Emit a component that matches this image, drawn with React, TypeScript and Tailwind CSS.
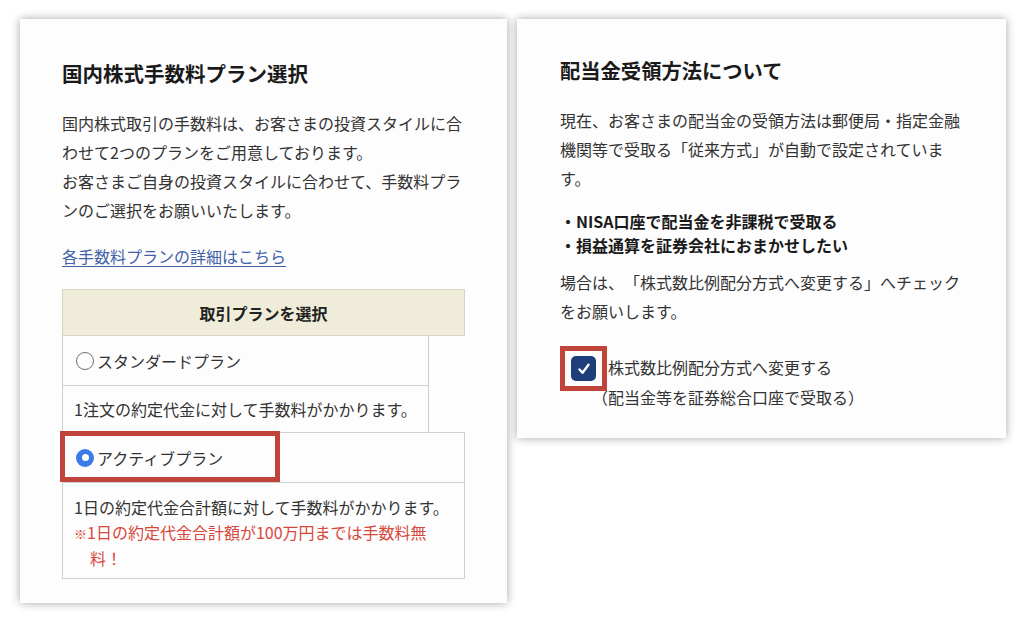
import React from "react";

const font = { fontFamily: '"Noto Sans CJK JP", "Noto Sans", sans-serif' };

function RadioOff() {
  return <span className="inline-block w-[18px] h-[18px] rounded-full border-[1.5px] border-[#6f6f6f] bg-white shrink-0" />;
}
function RadioOn() {
  return (
    <span className="w-[18px] h-[18px] rounded-full bg-[#3b7be8] shrink-0 flex items-center justify-center">
      <span className="w-[7px] h-[7px] rounded-full bg-white" />
    </span>
  );
}

export default function App() {
  return (
    <div className="w-[1024px] h-[623px] bg-white overflow-hidden text-[#333] [text-spacing-trim:space-all]" style={font}>
      <div className="flex items-start gap-[10px] pl-[20px] pt-[19px]">
        {/* Left card */}
        <div className="w-[487px] h-[584px] bg-[#fdfdfd] shadow-[0_0_9px_rgba(0,0,0,0.35)] px-[42px] pt-[39px]">
          <h2 className="text-[20.5px] leading-[30px] font-bold text-[#1a1a1a]">国内株式手数料プラン選択</h2>
          <p className="mt-[21px] text-[16px] leading-[29px]">
            国内株式取引の手数料は、お客さまの投資スタイルに合わせて2つのプランをご用意しております。
            <br />
            お客さまご自身の投資スタイルに合わせて、手数料プランのご選択をお願いいたします。
          </p>
          <div className="mt-[17px] text-[16px] leading-[29px]">
            <span className="text-[#4262a8] underline underline-offset-[3px] decoration-[1px]">各手数料プランの詳細はこちら</span>
          </div>
          <div className="mt-[18px] w-[403px] text-[16px]">
            <div className="h-[47px] bg-[#efedd9] border border-[#d6d4c4] flex items-center justify-center font-bold text-[#222]">
              取引プランを選択
            </div>
            <div className="w-[367px] h-[50px] border border-t-0 border-[#d0d0d0] flex items-center gap-[3px] pl-[13px]">
              <RadioOff />
              <span>スタンダードプラン</span>
            </div>
            <div className="w-[367px] h-[46px] border-x border-[#d0d0d0] flex items-center pl-[11px]">
              1注文の約定代金に対して手数料がかかります。
            </div>
            <div className="relative h-[51px] border border-[#d0d0d0] flex items-center gap-[3px] pl-[13px]">
              <RadioOn />
              <span>アクティブプラン</span>
              <div className="absolute left-[-3px] top-[-2px] w-[220px] h-[51px] border-[5px] border-[#c0443a]" />
            </div>
            <div className="h-[96px] border border-t-0 border-[#d0d0d0] pl-[11px] pt-[12px] leading-[24.5px]">
              <div>1日の約定代金合計額に対して手数料がかかります。</div>
              <div className="text-[#d8473b] pl-[16px] -indent-[16px] pr-[30px]">
                <span className="text-[13px]">※</span>1日の約定代金合計額が100万円までは手数料無料！
              </div>
            </div>
          </div>
        </div>

        {/* Right card */}
        <div className="w-[489px] h-[419px] bg-[#fdfdfd] shadow-[0_0_9px_rgba(0,0,0,0.35)] pl-[43px] pr-[40px] pt-[36px]">
          <h2 className="text-[20.3px] leading-[30px] font-bold text-[#1a1a1a]">配当金受領方法について</h2>
          <p className="mt-[21px] text-[16px] leading-[29px]">
            現在、お客さまの配当金の受領方法は郵便局・指定金融機関等で受取る「従来方式」が自動で設定されています。
          </p>
          <div className="mt-[16px] text-[16px] leading-[24px] font-bold text-[#1a1a1a]">
            <div>・NISA口座で配当金を非課税で受取る</div>
            <div>・損益通算を証券会社におまかせしたい</div>
          </div>
          <p className="mt-[11px] text-[16px] leading-[29px]">
            場合は、「株式数比例配分方式へ変更する」へチェックをお願いします。
          </p>
          <div className="mt-[20px] flex items-start">
            <div className="w-[47px] h-[45px] border-[5px] border-[#c0443a] flex items-center justify-center shrink-0">
              <span className="w-[25px] h-[25px] rounded-[5px] bg-[#1e3d7b] flex items-center justify-center">
                <svg width="16" height="16" viewBox="0 0 16 16" fill="none">
                  <path d="M3.5 8.5 L6.5 11.8 L12.5 3.8" stroke="white" strokeWidth="2.4" strokeLinecap="round" strokeLinejoin="round" />
                </svg>
              </span>
            </div>
            <div className="text-[16px] leading-[30px] pt-[6px]">
              <div className="pl-[1px]">株式数比例配分方式へ変更する</div>
              <div className="-ml-[15px]">（配当金等を証券総合口座で受取る）</div>
            </div>
          </div>
        </div>
      </div>
    </div>
  );
}
